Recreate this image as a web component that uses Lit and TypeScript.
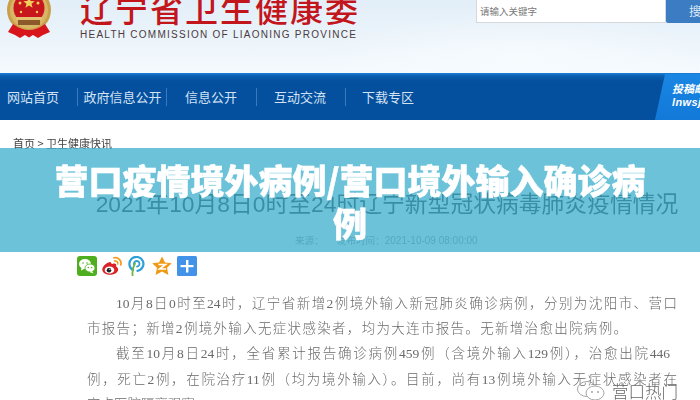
import { LitElement, html, css, svg } from "lit";
import { customElement } from "lit/decorators.js";

const navItems = [
  { label: "网站首页", cls: "n0" },
  { label: "政府信息公开", cls: "n1" },
  { label: "信息公开", cls: "n2" },
  { label: "互动交流", cls: "n3" },
  { label: "下载专区", cls: "n4" },
];

const emblem = svg`<svg class="emblem" width="46" height="42" viewBox="0 0 46 42">
  <circle cx="23" cy="12" r="22" fill="#c9a04a"/>
  <circle cx="23" cy="12" r="19" fill="#d9b566"/>
  <circle cx="23" cy="10" r="15.500" fill="#c8161d"/>
  <path d="M7 26 L2 34 L9 37 L14 40 L19 37 L23 39.500 L27 37 L32 40 L37 37 L44 34 L39 26 Q31 32 23 32 Q15 32 7 26Z" fill="#d8151d"/>
  <rect x="10" y="19" width="26" height="3" fill="#e4c071"/>
  <rect x="12" y="22" width="22" height="5" fill="#8c5a2a"/>
  <path d="M23 -1 l1.600 4 4.200.200 -3.300 2.600 1.100 4 -3.600-2.300 -3.600 2.300 1.100-4 -3.300-2.600 4.200-.200z" fill="#f0cf5a"/>
  <circle cx="14" cy="5" r="1.500" fill="#f0cf5a"/><circle cx="32" cy="5" r="1.500" fill="#f0cf5a"/>
  <circle cx="15" cy="14" r="1.200" fill="#f0cf5a"/><circle cx="31" cy="14" r="1.200" fill="#f0cf5a"/>
</svg>`;

const wechat = svg`<svg width="20" height="20" viewBox="0 0 20 20">
  <rect width="20" height="20" rx="3" fill="#4fae1e"/>
  <ellipse cx="8" cy="8" rx="6" ry="5" fill="#fff"/><path d="M4.500 11 L4 14.500 L8 12.500Z" fill="#fff"/>
  <ellipse cx="13" cy="12" rx="5" ry="4" fill="#fff" stroke="#4fae1e" stroke-width=".8"/><path d="M15 15 L16.500 17.500 L12.500 16Z" fill="#fff"/>
  <circle cx="6" cy="7" r=".8" fill="#4fae1e"/><circle cx="10" cy="7" r=".8" fill="#4fae1e"/>
  <circle cx="11.300" cy="11.500" r=".7" fill="#4fae1e"/><circle cx="14.700" cy="11.500" r=".7" fill="#4fae1e"/>
</svg>`;

const weibo = svg`<svg width="20" height="20" viewBox="0 0 20 20">
  <path d="M8 6 C3.500 7 0 11 0.300 14 C0.800 18 6.500 19.500 10.500 18.500 C15 17.500 17 14.500 15.800 12 C15.200 11 14 10.800 14.200 10 C14.800 8 13 6.800 10.500 8 C9.200 8.500 9.300 6 8 6Z" fill="#dc2127"/>
  <ellipse cx="7.500" cy="14" rx="4.800" ry="3.600" fill="#fff"/>
  <circle cx="7" cy="14.200" r="2.300" fill="#222"/><circle cx="7.800" cy="13.500" r=".6" fill="#fff"/>
  <path d="M12 1.800 C16 0.800 20 4.500 18.800 9" fill="none" stroke="#f09a1a" stroke-width="1.700" stroke-linecap="round"/>
  <path d="M12.500 5 C14.500 4.500 16.300 6.200 15.800 8" fill="none" stroke="#f09a1a" stroke-width="1.500" stroke-linecap="round"/>
</svg>`;

const pengyou = svg`<svg width="20" height="20" viewBox="0 0 20 20">
  <path d="M6 14 A7 7 0 1 1 10.500 14.800" fill="none" stroke="#2f9fd8" stroke-width="2.200" stroke-linecap="round"/>
  <path d="M7.200 9 A2.800 2.800 0 1 1 10 10.600" fill="none" stroke="#2f9fd8" stroke-width="1.800" stroke-linecap="round"/>
  <path d="M8 7.500 C6 11 5 15 5.600 19.500" fill="none" stroke="#6fb54a" stroke-width="1.800" stroke-linecap="round"/>
</svg>`;

const qzone = svg`<svg width="20" height="20" viewBox="0 0 20 20">
  <path d="M10 0.500 L13 6.500 L19.800 7.300 L15 11.800 L16.400 19 L10 15.500 L3.600 19 L5 11.800 L0.200 7.300 L7 6.500Z" fill="#ee9a17"/>
  <path d="M6.500 8.500 H13.500 L7.500 13 H14" fill="none" stroke="#fff" stroke-width="1.600"/>
</svg>`;

const plus = svg`<svg width="20" height="20" viewBox="0 0 20 20">
  <rect width="20" height="20" rx="1.500" fill="#4192e8"/>
  <rect x="9" y="4" width="2.400" height="12.500" fill="#fff"/><rect x="3.500" y="9" width="13" height="2.200" fill="#fff"/>
</svg>`;

const bubble = svg`<svg class="wm-icon" width="32" height="20" viewBox="0 0 32 20">
  <ellipse cx="12" cy="8" rx="9.500" ry="7.500" fill="none" stroke="#a5a5a5" stroke-width="1"/>
  <ellipse cx="20" cy="12" rx="9" ry="7" fill="#fff" stroke="#a5a5a5" stroke-width="1"/>
  <circle cx="17" cy="11" r=".9" fill="#999"/><circle cx="23" cy="11" r=".9" fill="#999"/>
</svg>`;

@customElement("app-root")
export class AppRoot extends LitElement {
  static styles = css`
    :host {
      display: block;
      width: 700px;
      height: 400px;
      overflow: hidden;
      position: relative;
      background: #fff;
      font-family: "Noto Sans CJK SC", "Liberation Sans", sans-serif;
    }
    .page { filter: blur(0.45px); height: 400px; overflow: hidden; }
    .header {
      height: 73px;
      display: flex;
      overflow: hidden;
      background:
        radial-gradient(ellipse 200px 50px at 520px 62px, #f6fbfe 0%, rgba(246,251,254,0) 100%),
        linear-gradient(180deg, #e2eef8 0%, #eaf3fa 45%, #f5fafe 100%);
    }
    .emblem { flex: none; margin: -2px 0 0 6px; }
    .brand { flex: none; width: 396px; margin-left: 28px; }
    .cn {
      height: 26px;
      display: flex;
      align-items: flex-end;
      overflow: hidden;
      color: #c3161c;
      font-size: 33px;
      font-weight: 500;
      letter-spacing: 2px;
      line-height: 33px;
      white-space: nowrap;
    }
    .cn span { position: relative; top: -1px; }
    .en {
      margin-top: 3px;
      font-family: "Liberation Sans", sans-serif;
      font-size: 10px;
      line-height: 12px;
      letter-spacing: 1.26px;
      color: #4c3a3e;
      white-space: nowrap;
    }
    .search { display: flex; height: 23px; flex: none; }
    .input {
      width: 190px;
      box-sizing: border-box;
      background: #fff;
      border: 1px solid #d5d8dc;
      border-top: 0;
      padding-left: 3px;
      font-size: 9.5px;
      line-height: 22px;
      color: #7a7a7a;
    }
    .btn {
      width: 60px;
      background: #3b7cc3;
      color: #dfeaf6;
      font-size: 12px;
      line-height: 22px;
      padding-left: 23px;
      box-sizing: border-box;
      letter-spacing: 3px;
      white-space: nowrap;
      border-bottom-left-radius: 2px;
    }
    .nav {
      height: 47px;
      display: flex;
      background: linear-gradient(180deg, #1c80d8 0, #0a5eb0 3px, #04509f 8px, #04509f 100%);
      position: relative;
      overflow: hidden;
    }
    .item {
      flex: none;
      height: 47px;
      display: flex;
      align-items: center;
      justify-content: center;
      box-sizing: border-box;
      font-size: 13px;
      color: #d3e2f2;
      white-space: nowrap;
      position: relative;
    }
    .item::after {
      content: "";
      position: absolute;
      right: 0;
      top: 15px;
      height: 18px;
      width: 1px;
      background: #3a79bb;
    }
    .n0 { width: 78px; padding-right: 12px; }
    .n1 { width: 89px; }
    .n2 { width: 90px; padding-right: 2px; }
    .n3 { width: 89px; padding-right: 3px; }
    .n4 { width: 84px; }
    .n4::after { display: none; }
    .mail {
      position: absolute;
      left: 655px;
      top: 1px;
      width: 60px;
      height: 46px;
      background: linear-gradient(180deg, #1a86e4, #1279d8);
      clip-path: polygon(10px 0, 100% 0, 100% 100%, 0 100%);
      color: #fff;
      font-style: italic;
      font-weight: 700;
      font-size: 11px;
      line-height: 14px;
      padding: 7px 0 0 17px;
      box-sizing: border-box;
      white-space: nowrap;
    }
    .mail div:last-child { font-family: "Liberation Sans", sans-serif; letter-spacing: .4px; }
    .crumb {
      margin: 16px 0 0 13px;
      font-size: 11px;
      line-height: 14px;
      color: #444;
      height: 14px;
    }
    .title {
      margin-top: 37px;
      text-align: center;
      padding-left: 74px;
      font-size: 22.8px;
      line-height: 34px;
      color: #333;
      white-space: nowrap;
      font-family: "Liberation Sans", "Noto Sans CJK SC", sans-serif;
      font-weight: 400;
    }
    .meta {
      margin-top: 12px;
      padding-left: 295px;
      display: flex;
      gap: 13px;
      font-size: 9.6px;
      line-height: 14px;
      color: #999;
      white-space: nowrap;
    }
    .date { font-family: "Liberation Sans", "Noto Sans CJK SC", sans-serif; font-size: 10px; }
    .share {
      display: flex;
      align-items: center;
      gap: 5px;
      margin: 8px 0 0 77px;
      height: 20px;
    }
    .article {
      margin: 15px 23px 0 87px;
      font-family: "Liberation Serif", "Noto Sans CJK SC", serif;
      font-size: 13.5px;
      font-weight: 300;
      line-height: 25.2px;
      color: #6a6a6a;
    }
    .line { white-space: nowrap; height: 25.2px; }
    .j { text-align: justify; text-align-last: justify; white-space: normal; }
    .in { padding-left: 29px; }
    .l2 { width: 540px; }
    .l3 { width: 554px; }
    .banner {
      position: absolute;
      left: 0;
      top: 148px;
      width: 700px;
      height: 104px;
      box-sizing: border-box;
      padding: 10px 40px 0;
      background: rgba(59, 174, 203, 0.75);
      color: #fff;
      font-size: 34px;
      font-weight: 900;
      line-height: 43px;
      text-align: center;
      -webkit-text-stroke: 0.5px #fff;
    }
    .wm {
      position: absolute;
      left: 575px;
      top: 381px;
      display: flex;
      align-items: center;
      gap: 5px;
      height: 20px;
      font-size: 16.5px;
      font-weight: 300;
      line-height: 20px;
      color: #666;
      white-space: nowrap;
    }
  `;

  render() {
    return html`
      <div class="page">
        <div class="header">
          ${emblem}
          <div class="brand">
            <div class="cn"><span>辽宁省卫生健康委</span></div>
            <div class="en">HEALTH COMMISSION OF LIAONING PROVINCE</div>
          </div>
          <div class="search">
            <div class="input">请输入关键字</div>
            <div class="btn">搜索</div>
          </div>
        </div>
        <div class="nav">
          ${navItems.map((n) => html`<div class="item ${n.cls}">${n.label}</div>`)}
          <div class="mail"><div>投稿邮箱</div><div>lnwsjs</div></div>
        </div>
        <div class="crumb">首页 &gt; 卫生健康快讯</div>
        <div class="title">2021年10月8日0时至24时辽宁新型冠状病毒肺炎疫情情况</div>
        <div class="meta"><span>来源：</span><span>发布时间：<span class="date">2021-10-09 08:00:00</span></span></div>
        <div class="share">${wechat}${weibo}${pengyou}${qzone}${plus}</div>
        <div class="article">
          <div class="line j in">10月8日0时至24时，辽宁省新增2例境外输入新冠肺炎确诊病例，分别为沈阳市、营口</div>
          <div class="line j l2">市报告；新增2例境外输入无症状感染者，均为大连市报告。无新增治愈出院病例。</div>
          <div class="line j in l3">截至10月8日24时，全省累计报告确诊病例459例（含境外输入129例），治愈出院446</div>
          <div class="line j">例，死亡2例，在院治疗11例（均为境外输入）。目前，尚有13例境外输入无症状感染者在</div>
          <div class="line">定点医院隔离观察。</div>
        </div>
      </div>
      <div class="banner">营口疫情境外病例/营口境外输入确诊病例</div>
      <div class="wm">${bubble}<span>营口热门</span></div>
    `;
  }
}
